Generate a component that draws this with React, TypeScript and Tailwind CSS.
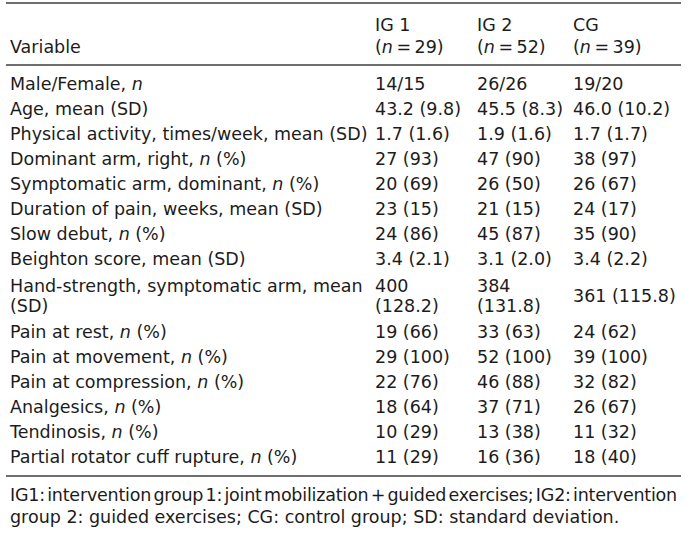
const rows: [React.ReactNode, string, string, string][] = [
  [<>Male/Female, <i>n</i></>, '14/15', '26/26', '19/20'],
  ['Age, mean (SD)', '43.2 (9.8)', '45.5 (8.3)', '46.0 (10.2)'],
  ['Physical activity, times/week, mean (SD)', '1.7 (1.6)', '1.9 (1.6)', '1.7 (1.7)'],
  [<>Dominant arm, right, <i>n</i> (%)</>, '27 (93)', '47 (90)', '38 (97)'],
  [<>Symptomatic arm, dominant, <i>n</i> (%)</>, '20 (69)', '26 (50)', '26 (67)'],
  ['Duration of pain, weeks, mean (SD)', '23 (15)', '21 (15)', '24 (17)'],
  [<>Slow debut, <i>n</i> (%)</>, '24 (86)', '45 (87)', '35 (90)'],
  ['Beighton score, mean (SD)', '3.4 (2.1)', '3.1 (2.0)', '3.4 (2.2)'],
];

const rows2: [React.ReactNode, string, string, string][] = [
  [<>Pain at rest, <i>n</i> (%)</>, '19 (66)', '33 (63)', '24 (62)'],
  [<>Pain at movement, <i>n</i> (%)</>, '29 (100)', '52 (100)', '39 (100)'],
  [<>Pain at compression, <i>n</i> (%)</>, '22 (76)', '46 (88)', '32 (82)'],
  [<>Analgesics, <i>n</i> (%)</>, '18 (64)', '37 (71)', '26 (67)'],
  [<>Tendinosis, <i>n</i> (%)</>, '10 (29)', '13 (38)', '11 (32)'],
  [<>Partial rotator cuff rupture, <i>n</i> (%)</>, '11 (29)', '16 (36)', '18 (40)'],
];

function Row({ cells }: { cells: [React.ReactNode, string, string, string] }) {
  return (
    <>
      {cells.map((c, i) => (
        <div key={i} className="pl-[4px] leading-[25px] whitespace-nowrap">
          {c}
        </div>
      ))}
    </>
  );
}

export default function App() {
  return (
    <div
      className="w-[700px] h-[533px] bg-white text-[#1c1c1c] text-[17.5px] pt-[2px]"
      style={{ fontFamily: '"DejaVu Sans", Verdana, sans-serif' }}
    >
      <div className="ml-[6px] w-[675px]">
        {/* 表头 */}
        <div className="border-t-2 border-b-2 border-[#6e6e6e] grid grid-cols-[365px_102px_96px_112px] pt-[10px] pb-[6px] leading-[22px]">
          <div className="pl-[4px] self-end">Variable</div>
          <div className="pl-[4px]">
            IG 1<br />(<i>n</i>{'\u2009=\u2009'}29)
          </div>
          <div className="pl-[4px]">
            IG 2<br />(<i>n</i>{'\u2009=\u2009'}52)
          </div>
          <div className="pl-[4px]">
            CG<br />(<i>n</i>{'\u2009=\u2009'}39)
          </div>
        </div>

        {/* 表体 */}
        <div className="border-b-2 border-[#6e6e6e] grid grid-cols-[365px_102px_96px_112px] pt-[6px] pb-[5px]">
          {rows.map((r, i) => (
            <Row key={i} cells={r} />
          ))}
          <div className="pl-[4px] leading-[20px] py-[4px] whitespace-nowrap">
            Hand-strength, symptomatic arm, mean
            <br />
            (SD)
          </div>
          <div className="pl-[4px] leading-[20px] py-[4px]">
            400
            <br />
            (128.2)
          </div>
          <div className="pl-[4px] leading-[20px] py-[4px]">
            384
            <br />
            (131.8)
          </div>
          <div className="pl-[4px] self-center whitespace-nowrap">361 (115.8)</div>
          {rows2.map((r, i) => (
            <Row key={i} cells={r} />
          ))}
        </div>

        {/* 注释 */}
        <div className="mt-[7px] pl-[4px] leading-[22px]">
          <div className="whitespace-nowrap [word-spacing:-3px] tracking-[-0.22px]">
            IG1: intervention group 1: joint mobilization + guided exercises; IG2: intervention
          </div>
          <div className="whitespace-nowrap">
            group 2: guided exercises; CG: control group; SD: standard deviation.
          </div>
        </div>
      </div>
    </div>
  );
}
